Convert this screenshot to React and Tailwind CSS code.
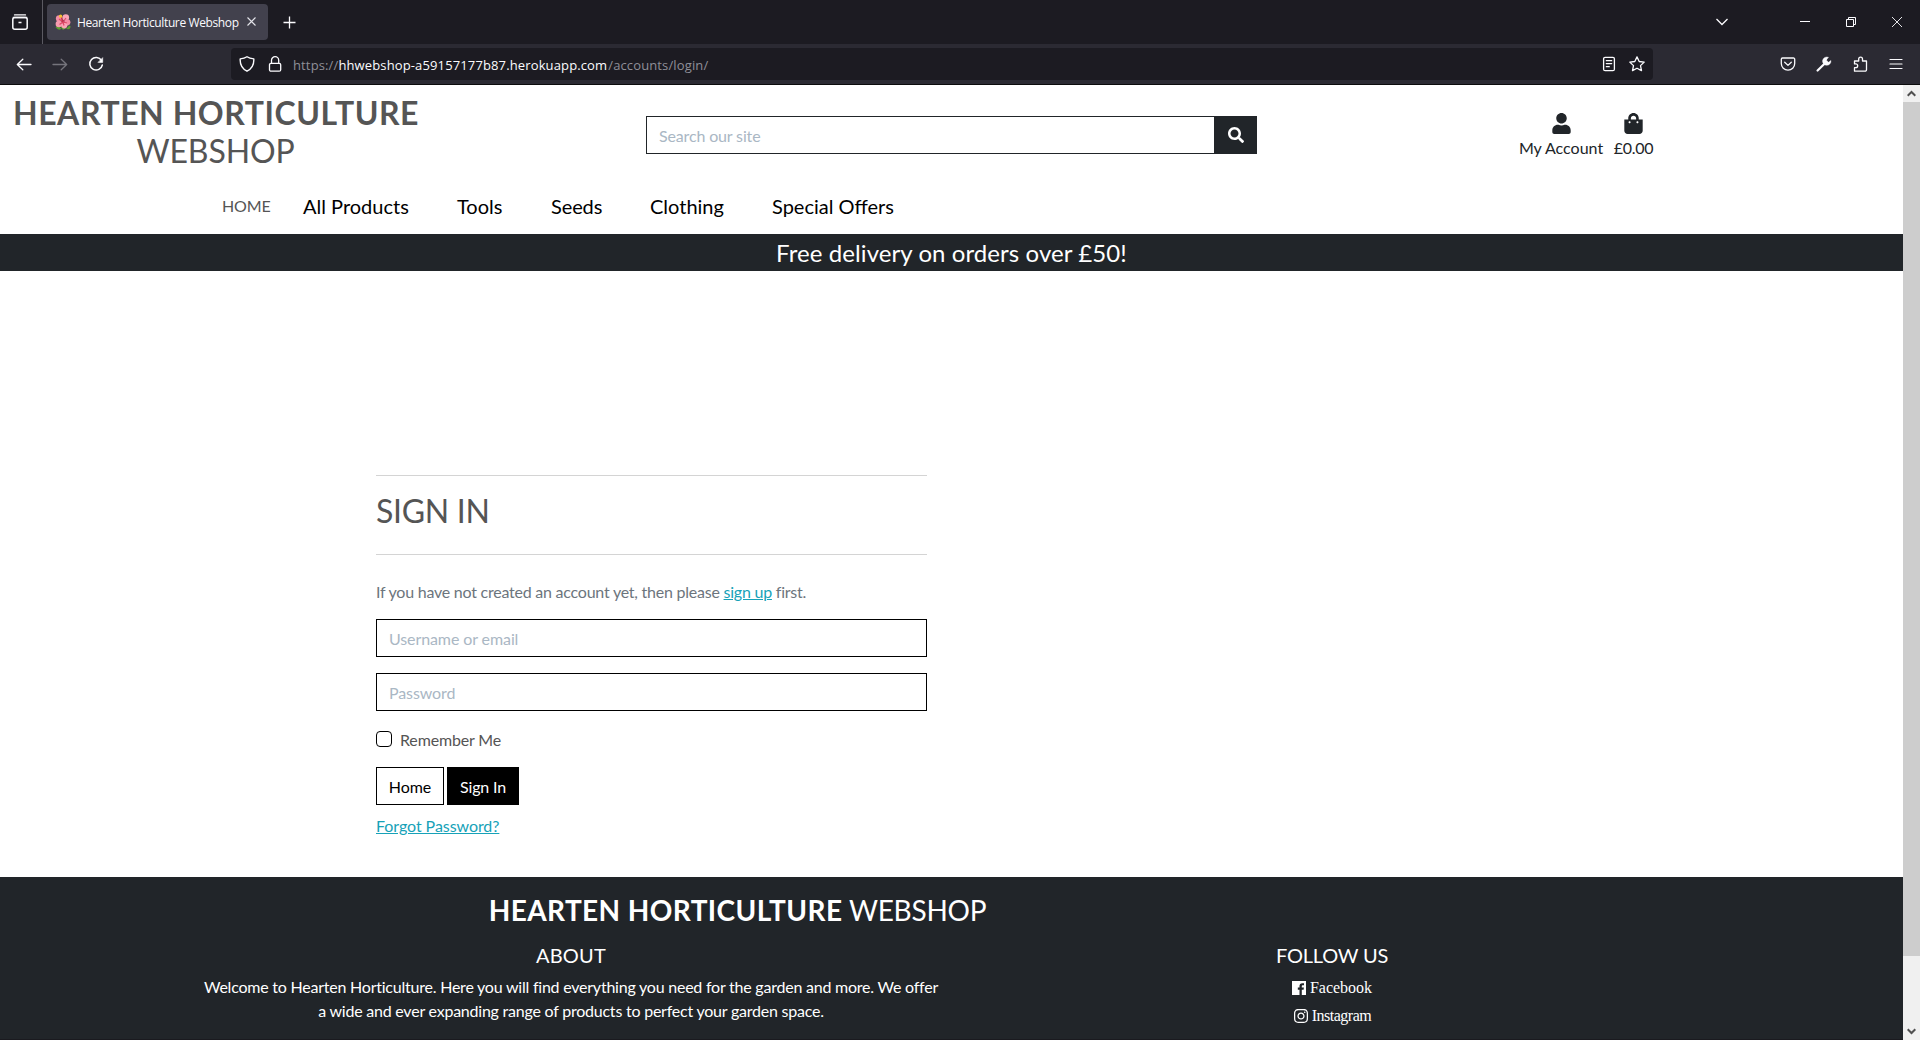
import { FaUser, FaShoppingBag, FaSearch, FaInstagram } from "react-icons/fa";

const UI = "font-['Open_Sans',sans-serif]";

function Line({ size = 16, className = "", children, fill = "none" }) {
  return (
    <svg
      width={size}
      height={size}
      viewBox="0 0 16 16"
      fill={fill}
      stroke="currentColor"
      strokeWidth="1.3"
      strokeLinecap="round"
      strokeLinejoin="round"
      className={`shrink-0 ${className}`}
    >
      {children}
    </svg>
  );
}

function Hibiscus() {
  return (
    <svg width="16" height="16" viewBox="0 0 16 16" className="shrink-0">
      <path d="M.6 13.2 3 11.5l3.5 3.3-2 .9-1.800-.5zM11 15l3.300-3.500 1.500 1.300-1.500 2.400z" fill="#5c9e31" />
      <path d="M5 12l3 4 3-2-1-3z" fill="#5c9e31" />
      <circle cx="4.200" cy="4.600" r="3.300" fill="#f58fa6" />
      <circle cx="10.800" cy="3.500" r="3.300" fill="#fba5b6" />
      <circle cx="12.300" cy="8.300" r="3.100" fill="#f48ca4" />
      <circle cx="9.300" cy="11.300" r="3.100" fill="#fba5b6" />
      <circle cx="3.900" cy="10" r="3.300" fill="#f79bae" />
      <path d="M8 8 4 5M8 8l3-4M8 8l4 1M8 8l1 3.500M8 8 4.500 10.500" stroke="#dc4867" strokeWidth="1.200" />
      <path d="M8 8 6 3" stroke="#c72f49" strokeWidth="1.300" />
      <circle cx="5.600" cy="2.200" r="1.600" fill="#f8c431" />
    </svg>
  );
}

function TabStrip() {
  return (
    <div className="flex h-[44px] items-center bg-[#1c1b22] text-[#fbfbfe]">
      <div className="flex h-full w-[43px] items-center border-r border-[#5b5a62] pl-[12px]">
        <Line>
          <path d="M2.500.9h11" />
          <rect x=".8" y="3.600" width="14.400" height="11.600" rx="2" strokeWidth="1.500" />
          <path d="M.8 3.600h14.400M6.500 8.600h3" strokeWidth="1.500" strokeLinecap="butt" />
        </Line>
      </div>
      <div className="ml-[4px] flex h-[36px] w-[221px] items-center rounded-[4px] bg-[#42414d] pl-[8px]">
        <Hibiscus />
        <span className={`${UI} mt-[2px] ml-[6px] w-[170px] whitespace-nowrap text-[12px] leading-[18px] tracking-[-0.38px]`}>
          Hearten Horticulture Webshop
        </span>
        <svg width="9" height="9" viewBox="0 0 9 9" stroke="#e4e4ea" strokeWidth="1.100" className="mb-px">
          <path d="M.5.5l8 8M8.500.5l-8 8" />
        </svg>
      </div>
      <svg width="13" height="13" viewBox="0 0 13 13" stroke="currentColor" strokeWidth="1.300" className="ml-[15px] mt-px">
        <path d="M6.500.5v12M.5 6.500h12" />
      </svg>
      <div className="ml-auto flex items-center pr-[18px]">
        <svg width="12" height="8" viewBox="0 0 12 8" fill="none" stroke="currentColor" strokeWidth="1.300">
          <path d="M.5 1 6 6.500 11.500 1" />
        </svg>
        <svg width="10" height="10" viewBox="0 0 10 10" stroke="currentColor" className="ml-[72px]">
          <path d="M0 4.500h10" />
        </svg>
        <svg width="10" height="10" viewBox="0 0 10 10" fill="none" stroke="currentColor" className="ml-[36px]">
          <path d="M.5 2.500h7v7h-7zM2.500 2.500v-2h7v7h-2" />
        </svg>
        <svg width="10" height="10" viewBox="0 0 10 10" stroke="currentColor" strokeWidth=".9" className="ml-[36px]">
          <path d="M0 0l10 10M10 0 0 10" />
        </svg>
      </div>
    </div>
  );
}

function Toolbar() {
  return (
    <div className="flex h-[41px] items-center border-b border-[#0c0c0d] bg-[#2b2a33] text-[#fbfbfe]">
      <Line className="ml-[16px]">
        <path d="M15 8.500H1.500M6.800 3.200 1.300 8.500l5.500 5.300" />
      </Line>
      <Line className="ml-[20px] text-[#75747c]">
        <path d="M1 8.500h13.500M9.200 3.200l5.500 5.300-5.500 5.300" />
      </Line>
      <Line className="ml-[20px]">
        <path d="M13.500 4.500A6.300 6.300 0 1 0 14.300 9" strokeWidth="1.500" />
        <path d="M14.700 2v4.400h-4.400z" fill="currentColor" strokeWidth=".6" />
      </Line>
      <div className="ml-[127px] flex h-[32px] w-[1422px] items-center rounded-[4px] bg-[#1c1b22]">
        <Line className="ml-[8px]">
          <path d="M8 .8C6 2.200 3.600 2.700 1.200 2.900c-.3 5 1.800 9.800 6.800 12.300 5-2.500 7.100-7.300 6.800-12.300C12.400 2.700 10 2.200 8 .8z" strokeWidth="1.400" />
        </Line>
        <Line className="ml-[12px]">
          <rect x="2.500" y="7.300" width="11.200" height="7.900" rx="1.500" />
          <path d="M4.500 7V4.300a3.600 3.600 0 0 1 7.200 0V7" />
        </Line>
        <div className={`${UI} mt-[2px] ml-[10px] whitespace-nowrap text-[13px] leading-[20px] tracking-[0.13px] text-[#8f8f98]`}>
          https://<span className="text-[#fbfbfe]">hhwebshop-a59157177b87.herokuapp.com</span>
          <span className="ml-px">/accounts/login/</span>
        </div>
        <Line className="ml-auto">
          <rect x="2.600" y="1.300" width="10.800" height="13.400" rx="1.500" />
          <path d="M5.300 4.700h5.400M5.300 7.600h5.400M5.300 10.700h3" strokeWidth="1.200" />
        </Line>
        <Line className="mr-[8px] ml-[12px]">
          <path d="m8 .9 2.200 4.600 5 .6-3.700 3.500 1 5L8 12.200l-4.500 2.400 1-5L.8 6.100l5-.6z" />
        </Line>
      </div>
      <div className="ml-auto flex items-center gap-[20px] pr-[16px]">
        <Line>
          <path d="M2.500 2h11a1.200 1.200 0 0 1 1.200 1.200V7.500a6.700 6.700 0 0 1-13.400 0V3.200A1.200 1.200 0 0 1 2.500 2zM4.700 6.300 8 9.400l3.300-3.100" />
        </Line>
        <Line>
          <path d="M1.600 14.500 9 7.200" strokeWidth="2.200" />
          <path d="M12.300 1.200A4.200 4.200 0 1 0 14.900 4.500l-2.400 1.700-2-2z" fill="currentColor" strokeWidth=".4" />
        </Line>
        <Line>
          <path d="M2.500 15.200v-3.500h1.300a1.900 1.900 0 0 0 0-3.800H2.500V5h4.200V3a1.900 1.900 0 0 1 3.800 0v2h4v8.800a1.400 1.400 0 0 1-1.400 1.400z" />
        </Line>
        <Line>
          <path d="M2 3.500h12M2 8h12M2 12.500h12" strokeWidth="1.200" />
        </Line>
      </div>
    </div>
  );
}

function Header() {
  return (
    <header>
      <div className="flex h-[109px] pt-[9px]">
        <h1 className="w-[432px] text-center text-[32px] leading-[38px] whitespace-nowrap text-[#555]">
          <strong className="font-bold tracking-[0.55px]">HEARTEN HORTICULTURE</strong>
          <br />
          <span className="mr-px tracking-[-0.1px]">WEBSHOP</span>
        </h1>
        <div className="mt-[22px] ml-[214px] flex h-[38px] w-[611px]">
          <div className="flex-1 border border-[#212529] pt-[7px] pl-[12px] leading-[24px] tracking-[-0.15px] text-[#aab7c4]">
            Search our site
          </div>
          <div className="flex w-[42px] items-center justify-center bg-[#212529] text-white">
            <FaSearch size={16} />
          </div>
        </div>
        <div className="mt-[19px] ml-[261px] flex text-[#212529]">
          <div className="flex w-[86px] flex-col items-center">
            <FaUser size={21} />
            <span className="mt-[2px] leading-[24px] whitespace-nowrap">My Account</span>
          </div>
          <div className="ml-[8px] flex w-[42px] flex-col items-center">
            <FaShoppingBag size={21} />
            <span className="mt-[2px] ml-px leading-[24px] tracking-[-0.25px] whitespace-nowrap">£0.00</span>
          </div>
        </div>
      </div>
      <nav className="flex h-[40px] pl-[221px] text-[20px] leading-[24px] whitespace-nowrap text-black">
        <span className="w-[82px] pl-px text-[16px] tracking-[-0.1px] text-[#555]">HOME</span>
        <span className="w-[154px]">All Products</span>
        <span className="w-[94px]">Tools</span>
        <span className="w-[99px] tracking-[-0.1px]">Seeds</span>
        <span className="w-[122px]">Clothing</span>
        <span>Special Offers</span>
      </nav>
      <div className="h-[37px] bg-[#212529] pt-px text-center text-[24px] leading-[36px] tracking-[0.08px] text-white">
        Free delivery on orders over £50!
      </div>
    </header>
  );
}

function SignIn() {
  const field = "h-[38px] border border-black pt-[7px] pl-[12px] leading-[24px] tracking-[-0.1px] text-[#aab7c4]";
  return (
    <main className="ml-[376px] h-[606px] w-[551px] pt-[204px] text-[#555]">
      <div className="h-px bg-[#d4d4d4]" />
      <h2 className="mt-[16px] text-[32px] leading-[38px] tracking-[-0.3px]">SIGN IN</h2>
      <div className="mt-[24px] h-px bg-[#d4d4d4]" />
      <p className="mt-[25px] leading-[24px] tracking-[-0.235px] whitespace-nowrap text-[#6c757d]">
        If you have not created an account yet, then please{" "}
        <span className="text-[#17a2b8] underline">sign up</span> first.
      </p>
      <div className={`${field} mt-[15px]`}>Username or email</div>
      <div className={`${field} mt-[16px]`}>Password</div>
      <div className="mt-[17px] flex items-center leading-[24px]">
        <span className="mb-[2px] h-[16px] w-[16px] rounded-[4px] border border-black" />
        <span className="ml-[8px] tracking-[-0.15px]">Remember Me</span>
      </div>
      <div className="mt-[15px] flex gap-[3px] leading-[24px]">
        <div className="h-[38px] w-[68px] border border-black pt-[7px] text-center text-black">Home</div>
        <div className="h-[38px] w-[72px] bg-black pt-[8px] text-center tracking-[-0.15px] text-white">Sign In</div>
      </div>
      <p className="mt-[9px] leading-[24px] tracking-[-0.06px] text-[#17a2b8]">
        <span className="underline">Forgot Password?</span>
      </p>
    </main>
  );
}

function Footer() {
  return (
    <footer className="h-[163px] border-b border-[#1a1a1f] bg-[#212529] pt-[16px] text-center text-white">
      <h2 className="w-[1475px] text-[28px] leading-[34px] tracking-[-0.25px]">
        <strong className="font-bold tracking-[0.4px]">HEARTEN HORTICULTURE</strong> WEBSHOP
      </h2>
      <div className="mt-[16px] flex">
        <section className="w-[1142px]">
          <h3 className="text-[20px] leading-[24px] tracking-[0.2px]">ABOUT</h3>
          <p className="mt-[8px] leading-[24px] tracking-[-0.225px]">
            Welcome to Hearten Horticulture. Here you will find everything you need for the garden and more. We offer
            <br />
            a wide and ever expanding range of products to perfect your garden space.
          </p>
        </section>
        <section className="w-[380px]">
          <h3 className="text-[20px] leading-[24px] tracking-[-0.2px]">FOLLOW US</h3>
          <div className="mt-[9px] flex items-center justify-center gap-[4px] font-['Liberation_Serif',serif] leading-[24px]">
            <svg width="14" height="14" viewBox="0 0 14 14">
              <path
                fill="currentColor"
                d="M0 0h14v14h-4.200V8.700h1.800l.3-2.200H9.800V5.200c0-.7.3-1 1-1h1.200V2.200h-1.700C8.400 2.200 7.500 3.300 7.500 5v1.500H5.800v2.200h1.700V14H0z"
              />
            </svg>
            <span>Facebook</span>
          </div>
          <div className="mt-[4px] flex items-center justify-center gap-[3px] font-['Liberation_Serif',serif] leading-[24px] tracking-[-0.5px]">
            <FaInstagram size={16} />
            <span>Instagram</span>
          </div>
        </section>
      </div>
    </footer>
  );
}

function ScrollBar() {
  return (
    <div className="flex w-[17px] shrink-0 flex-col bg-[#f0f0f0] text-[#505050]">
      <div className="flex h-[17px] items-center justify-center">
        <svg width="9" height="7" viewBox="0 0 9 7" fill="none" stroke="currentColor" strokeWidth="2">
          <path d="M.7 5.800 4.500 2 8.300 5.800" />
        </svg>
      </div>
      <div className="h-[854px] bg-[#cdcdcd]" />
      <div className="mt-auto flex h-[17px] items-center justify-center">
        <svg width="9" height="7" viewBox="0 0 9 7" fill="none" stroke="currentColor" strokeWidth="2">
          <path d="M.7 1.200 4.500 5 8.300 1.200" />
        </svg>
      </div>
    </div>
  );
}

export default function App() {
  return (
    <div className="flex h-[1040px] w-[1920px] flex-col overflow-hidden bg-white">
      <TabStrip />
      <Toolbar />
      <div className="flex h-[955px] font-['Lato',sans-serif] text-[16px]">
        <div className="w-[1903px]">
          <Header />
          <SignIn />
          <Footer />
        </div>
        <ScrollBar />
      </div>
    </div>
  );
}
